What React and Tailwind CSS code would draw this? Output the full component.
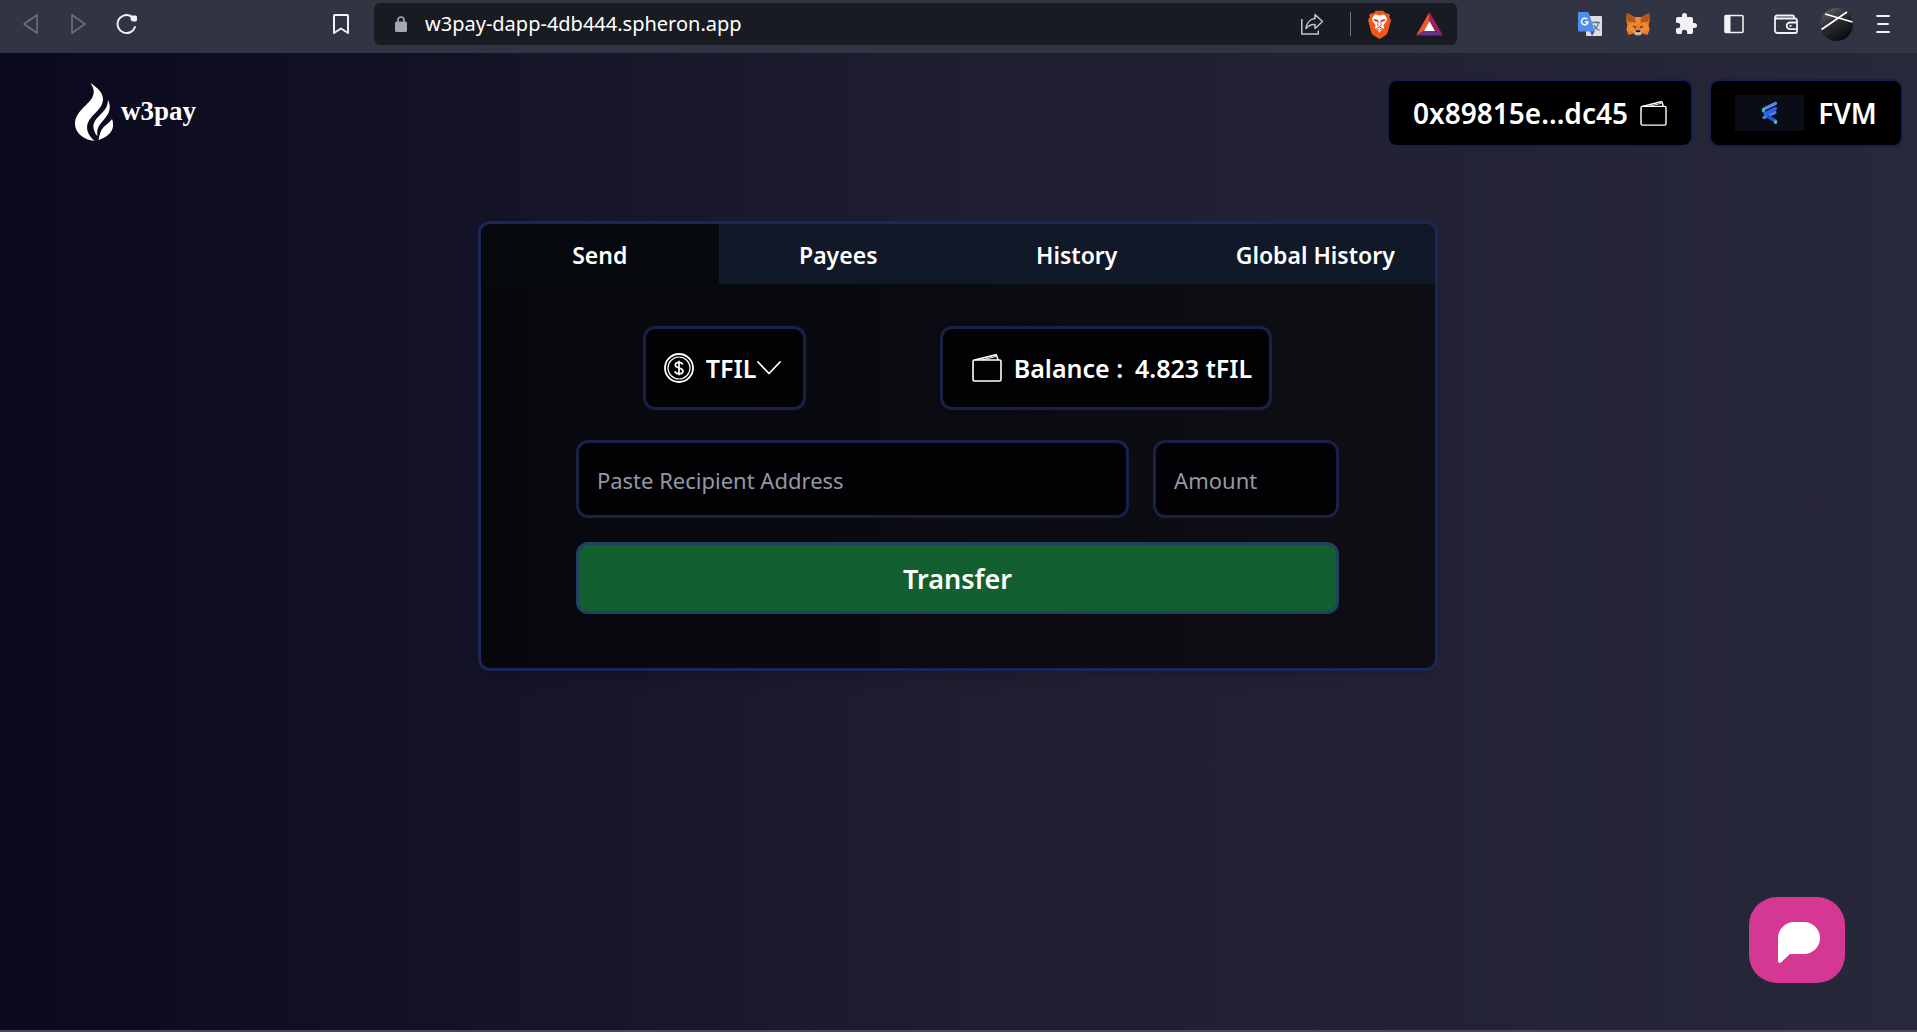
import React, { useState } from 'react'

const TABS = ['Send', 'Payees', 'History', 'Global History']

function BackIcon() {
  return (
    <svg className="w-6 h-6" viewBox="0 0 24 24" fill="none" stroke="#6d707c" strokeWidth="1.6" strokeLinejoin="round">
      <path d="M18 3v18L5 12z" />
    </svg>
  )
}

function ForwardIcon() {
  return (
    <svg className="w-6 h-6" viewBox="0 0 24 24" fill="none" stroke="#6d707c" strokeWidth="1.6" strokeLinejoin="round">
      <path d="M5 3v18l13-9z" />
    </svg>
  )
}

function ReloadIcon() {
  return (
    <svg className="w-6 h-6" viewBox="0 0 24 24" fill="none" stroke="#f1f1f6" strokeWidth="2" strokeLinecap="round">
      <path d="M15.5 4A9 9 0 1 0 20 15" />
      <path d="M17 5h3.500v3h-2a1.500 1.500 0 0 1-1.500-1.500z" fill="#f1f1f6" strokeWidth="3" strokeLinejoin="round" />
    </svg>
  )
}

function BookmarkIcon() {
  return (
    <svg className="w-6 h-6" viewBox="0 0 24 24" fill="none" stroke="#f1f1f6" strokeWidth="2" strokeLinejoin="round">
      <path d="M5 4a1 1 0 0 1 1-1h12a1 1 0 0 1 1 1v17l-7-4.500L5 21z" />
    </svg>
  )
}

function LockIcon() {
  return (
    <svg className="w-3 h-4" viewBox="0 0 12 16">
      <rect x="0" y="5.500" width="12" height="10.500" rx="1.500" fill="#a5a7b0" />
      <path d="M3 6V4a3 3 0 0 1 6 0v2" fill="none" stroke="#a5a7b0" strokeWidth="1.600" />
    </svg>
  )
}

function ShareIcon() {
  return (
    <svg className="w-6 h-6" viewBox="0 0 24 24" fill="none" stroke="#c3c4ca" strokeWidth="1.500">
      <path d="M1.800 7v15h16.500v-3.500" />
      <path d="M15 2.500l7.500 7-7.500 7v-4c-3.500-.3-6.500 1-9 4 .5-5.500 4-9.500 9-10z" strokeLinejoin="round" />
    </svg>
  )
}

function BraveIcon() {
  return (
    <svg className="w-[25px] h-[29px]" viewBox="0 0 25 29">
      <path d="M18.500 3.300L16.200.8H8.800L6.500 3.300C4.500 2.800 3 4 2 5l.8 2L1 10l3.200 12.300c.5 1.500 1 2.200 2.200 3L11 28.200c1 .7 2 .7 3 0l4.600-2.900c1.200-.8 1.700-1.500 2.200-3L24 10l-1.800-3 .8-2c-1-1-2.500-2.200-4.500-1.700z" fill="#f1561d" />
      <path d="M12.500 5.200c1.500 0 3-1 4.500-.7 1.300 1 2.300 2.500 3 4.500l-.8 2.500-2.900 3.800c.5 1 1 2.200.3 3.200l-2.600 2-1.500 2.300-1.500-2.300-2.600-2c-.7-1-.2-2.200.3-3.200l-2.900-3.800L5 9c.7-2 1.700-3.500 3-4.500 1.500-.3 3 .7 4.500.7z" fill="#fff" />
      <path d="M6.500 9l4.800 1-.4 1.800-3.500-.8zM18.500 9l-4.800 1 .4 1.800 3.500-.8z" fill="#b33a14" />
      <path d="M11.300 11l-.6 4.500 1.800 1.200 1.800-1.200-.6-4.500M9.500 18.500l3-1.500 3 1.500-3 1.800z" fill="none" stroke="#d4481a" strokeWidth=".9" />
    </svg>
  )
}

function RewardsIcon() {
  return (
    <svg className="w-[27px] h-6" viewBox="0 0 27 24">
      <path d="M13.500 0L0 23.500l8-4.500 5.500-9.500z" fill="#f1562f" />
      <path d="M13.500 0L27 23.500l-8-4.500-5.500-9.500z" fill="#9a1f63" />
      <path d="M0 23.500h27L19 19H8z" fill="#663392" />
      <path d="M13.500 9.300L19 19H8z" fill="#fff" />
    </svg>
  )
}

function TranslateIcon() {
  return (
    <svg className="w-6 h-6" viewBox="0 0 24 24">
      <rect x="8" y="4" width="16" height="20" rx="1" fill="#dcdee3" />
      <path d="M14 10.500h8M18 9v1.500M20.500 10.500c-.5 3.500-2.500 6-5 7.500M16 13c1 2.500 3 4.500 5.500 5.500" fill="none" stroke="#65798c" strokeWidth="1.300" />
      <path d="M12 19h5l-3 5z" fill="#3057b0" />
      <path d="M1 0h9.500L17 19.500H1a1 1 0 0 1-1-1V1a1 1 0 0 1 1-1z" fill="#4f8cf2" />
      <path d="M9.200 7.300A3.300 3.300 0 1 0 10 10H7" fill="none" stroke="#fff" strokeWidth="1.500" />
    </svg>
  )
}

function FoxIcon() {
  return (
    <svg className="w-6 h-6" viewBox="0 0 24 24">
      <path d="M1 1l7.500 4h7L23 1l1 7-1.500 5 1 5-2 5-5-1.500-2.500 2h-4l-2.500-2L2.500 23l-2-5 1-5L0 8z" fill="#e8792b" />
      <path d="M1 1l7.500 4 1 6L2 9.500 0 8zM23 1l-7.500 4-1 6L22 9.500l2-1.500z" fill="#b4571c" />
      <path d="M9.500 5h5l-1 7.500h-3z" fill="#f08b33" />
      <path d="M1.500 13l6.500-3 1.500 4-2 6-7-2zM22.500 13L16 10l-1.500 4 2 6 7-2z" fill="#f28a2e" />
      <path d="M6 13.500l4 1-.7 2zM18 13.500l-4 1 .7 2z" fill="#4a3024" />
      <path d="M8 19l2-1h4l2 1-1.500 3.500h-5z" fill="#d9cfc6" />
      <path d="M9.800 18.200h4.400l.4 2H9.400z" fill="#1f1a18" />
    </svg>
  )
}

function PuzzleIcon() {
  return (
    <svg className="w-6 h-6" viewBox="0 0 24 24" fill="#f1f1f6">
      <path d="M20.500 11H19V7a2 2 0 0 0-2-2h-4V3.500a2.500 2.500 0 0 0-5 0V5H4a2 2 0 0 0-2 2v3.800h1.500a2.700 2.700 0 0 1 0 5.400H2V20a2 2 0 0 0 2 2h3.800v-1.500a2.700 2.700 0 0 1 5.400 0V22H17a2 2 0 0 0 2-2v-4h1.500a2.500 2.500 0 0 0 0-5z" />
    </svg>
  )
}

function SidebarIcon() {
  return (
    <svg className="w-6 h-6" viewBox="0 0 24 24">
      <rect x="3" y="3.500" width="18" height="17" rx="1" fill="none" stroke="#f1f1f6" strokeWidth="1.600" />
      <path d="M3 3.500h5.500v17H3z" fill="#f1f1f6" />
    </svg>
  )
}

function BrowserWalletIcon() {
  return (
    <svg className="w-6 h-6" viewBox="0 0 24 24" fill="none" stroke="#f1f1f6" strokeWidth="1.800" strokeLinejoin="round">
      <path d="M20 6.500V5a1.500 1.500 0 0 0-1.500-1.500H3a2 2 0 0 0-2 2v13A2.500 2.500 0 0 0 3.500 21H21a2 2 0 0 0 2-2V8.500a2 2 0 0 0-2-2H3.500A2.300 2.300 0 0 1 1 4.800" />
      <path d="M23 10.500h-7a3.300 3.300 0 0 0 0 6.600h7" />
      <path d="M15.500 13.800h2" />
    </svg>
  )
}

function Avatar() {
  return (
    <svg className="w-[33px] h-[33px]" viewBox="0 0 33 33">
      <defs>
        <linearGradient id="avatar" x1="0" y1="0" x2=".6" y2="1">
          <stop offset="0" stopColor="#6a6d74" />
          <stop offset=".5" stopColor="#2b2d32" />
          <stop offset="1" stopColor="#0b0c0f" />
        </linearGradient>
      </defs>
      <circle cx="16.500" cy="16.500" r="16.500" fill="url(#avatar)" />
      <path d="M5 6l27.500 8M1.500 21.500L27 4" stroke="#fff" strokeWidth="1.700" />
    </svg>
  )
}

function MenuIcon() {
  return (
    <svg className="w-4 h-6" viewBox="0 0 16 24" stroke="#f1f1f6" strokeWidth="1.900" strokeLinecap="round">
      <path d="M2 4h12M3 12h10M2 20h12" />
    </svg>
  )
}

function FlameLogo() {
  return (
    <svg className="w-[38px] h-[58px]" viewBox="0 0 38 58" fill="#fff">
      <path d="M15.500 0c3.500 6 4.500 9 1.500 15C13 22 0 29 0 41c0 9 9 16 19.500 17C13 52 10.500 46 13 39.500 16.500 31 28 26 28 16.500 28 9.500 22.500 5 15.500 0z" />
      <path d="M33 17c-.5 8-4 11-8 15-4.500 4.500-8 8.500-6 15 .6 2.500 2 5 3.500 6-.8-5 0-9 4-13.500C31.500 34 38 27 33 17z" />
      <path d="M37 36c-3 4.500-6.500 5.500-9.500 9.500-2.200 3-3 6.500-4 11.500 6-2 11-5 13.500-10 1.500-3.500 1.500-7 0-11z" />
    </svg>
  )
}

function WalletIcon({ className }) {
  return (
    <svg className={className} viewBox="0 0 30 28" fill="none" stroke="#fff" strokeWidth="1.600" strokeLinejoin="round">
      <rect x="1" y="6" width="28" height="21" rx="1.500" />
      <path d="M2.500 6L23.500.9a1 1 0 0 1 1.200.7L26 6" />
      <path d="M10 6l14-3.500" strokeWidth="1" />
    </svg>
  )
}

function CoinIcon() {
  return (
    <svg className="w-[30px] h-[30px]" viewBox="0 0 30 30" fill="none" stroke="#fff">
      <circle cx="15" cy="15" r="14" strokeWidth="1.800" />
      <circle cx="15" cy="15" r="11" strokeWidth="1.200" />
      <path d="M18.700 11.500c-.5-1.400-1.800-2.100-3.700-2.100-2.200 0-3.700 1-3.700 2.700 0 4 7.700 1.800 7.700 5.800 0 1.800-1.700 2.800-4 2.800-2.200 0-3.700-.9-4.100-2.500M15 7.800v14.400" strokeWidth="1.700" />
    </svg>
  )
}

function ChevronIcon() {
  return (
    <svg className="w-6 h-[14px]" viewBox="0 0 24 14" fill="none" stroke="#fff" strokeWidth="1.800" strokeLinecap="round" strokeLinejoin="round">
      <path d="M1 1l11 11.500L23 1" />
    </svg>
  )
}

function FvmLogo() {
  return (
    <svg className="w-[69px] h-9 bg-[#0a0d16]" viewBox="0 0 69 36" fill="none" strokeWidth="3.200" strokeLinecap="round">
      <path d="M29 14l11.500-5.500" stroke="#5b87ee" />
      <path d="M28.500 14.500v1.500" stroke="#36b9c4" />
      <path d="M30 18.500l10.500-5" stroke="#2c62e8" />
      <path d="M29 22.500l11-5" stroke="#4a7bf0" />
      <path d="M33 21.500l7.500 4.500" stroke="#1f55e0" strokeWidth="3.600" />
      <path d="M40.500 26.500v1" stroke="#36c4a8" />
    </svg>
  )
}

function ChatIcon() {
  return (
    <svg className="w-[42px] h-[41px]" viewBox="0 0 42 41" fill="#fff">
      <path d="M16 0h10a16 16 0 0 1 0 32H12l-8.800 8.300C2 41.400 0 41 0 39V16A16 16 0 0 1 16 0z" />
    </svg>
  )
}

function BrowserBar() {
  return (
    <div className="flex h-[53px] shrink-0 items-start bg-[#313442]">
      <div className="flex h-12 w-[374px] items-center gap-6 pl-[19px] pr-[21px]">
        <button aria-label="Back"><BackIcon /></button>
        <button aria-label="Forward"><ForwardIcon /></button>
        <button aria-label="Reload"><ReloadIcon /></button>
        <button aria-label="Bookmark" className="ml-auto"><BookmarkIcon /></button>
      </div>
      <div className="mt-[3px] flex h-[42px] flex-1 items-center rounded-md bg-[#191b22] pl-[21px] pr-[14px]">
        <LockIcon />
        <input
          aria-label="Address"
          defaultValue="w3pay-dapp-4db444.spheron.app"
          className="ml-[18px] min-w-0 flex-1 bg-transparent text-[20px] leading-7 text-white outline-none"
        />
        <button aria-label="Share"><ShareIcon /></button>
        <div className="ml-[26px] h-6 w-px bg-[#73757e]" />
        <button aria-label="Shields" className="ml-4"><BraveIcon /></button>
        <button aria-label="Rewards" className="ml-6"><RewardsIcon /></button>
      </div>
      <div className="flex h-12 w-[460px] items-center justify-end pr-[26px]">
        <div className="mr-7 flex gap-6">
          <button aria-label="Translate"><TranslateIcon /></button>
          <button aria-label="MetaMask"><FoxIcon /></button>
          <button aria-label="Extensions"><PuzzleIcon /></button>
          <button aria-label="Sidebar"><SidebarIcon /></button>
        </div>
        <div className="flex items-center gap-[22px]">
          <button aria-label="Wallet"><BrowserWalletIcon /></button>
          <button aria-label="Profile"><Avatar /></button>
          <button aria-label="Menu"><MenuIcon /></button>
        </div>
      </div>
    </div>
  )
}

function Header() {
  return (
    <header className="flex items-start justify-between pl-[75px] pr-[14px] pt-[26px]">
      <a href="#" className="mt-1 flex items-center gap-2">
        <FlameLogo />
        <span className="mb-0.5 font-['Liberation_Serif',serif] text-[27px] font-bold leading-8 text-white">w3pay</span>
      </a>
      <div className="flex gap-4">
        <button className="flex h-[68px] items-center gap-3 rounded-[10px] border-2 border-[#162050] bg-black px-6 text-[28px] font-semibold text-white">
          0x89815e...dc45
          <WalletIcon className="h-[25px] w-[27px]" />
        </button>
        <button className="flex h-[68px] w-[194px] items-center justify-center gap-[14px] rounded-[10px] border-2 border-[#162050] bg-black text-[28px] font-semibold text-white">
          <FvmLogo />
          FVM
        </button>
      </div>
    </header>
  )
}

function TransferCard() {
  const [tab, setTab] = useState('Send')
  const [address, setAddress] = useState('')
  const [amount, setAmount] = useState('')

  return (
    <section className="mx-auto w-full max-w-[960px] overflow-hidden rounded-xl border-[3px] border-[#1b2659] bg-linear-to-r from-[#07070e] to-[#0e0e14] pb-[54px] shadow-lg">
      <div role="tablist" className="grid grid-cols-4">
        {TABS.map(t => (
          <button
            key={t}
            role="tab"
            aria-selected={t === tab}
            onClick={() => setTab(t)}
            className={`h-[60px] pt-0.5 text-[23px] font-semibold text-white ${t === tab ? 'bg-[#06090e]' : 'bg-[#111827]'}`}
          >
            {t}
          </button>
        ))}
      </div>

      <form className="mx-auto w-4/5 pt-[42px]" onSubmit={(e) => e.preventDefault()}>
        {/* Token + balance */}
        <div className="flex justify-around">
          <div className="flex h-[84px] w-[163px] items-center rounded-xl border-[3px] border-[#1a2148] bg-[#020204] pl-[18px]">
            <CoinIcon />
            <select aria-label="Token" className="ml-3 appearance-none bg-transparent pt-0.5 text-[25px] font-semibold text-white outline-none">
              <option>TFIL</option>
            </select>
            <ChevronIcon />
          </div>
          <div className="flex h-[84px] items-center rounded-xl border-[3px] border-[#1a2148] bg-[#020204] pl-[29px] pr-[17px] text-[25px] font-semibold text-white">
            <WalletIcon className="h-7 w-[30px]" />
            <span className="ml-3 pt-0.5">Balance :</span>
            <span className="ml-3 pt-0.5">4.823 tFIL</span>
          </div>
        </div>

        {/* Recipient */}
        <div className="mt-[30px] flex gap-6">
          <input
            aria-label="Recipient address"
            placeholder="Paste Recipient Address"
            value={address}
            onChange={(e) => setAddress(e.target.value)}
            className="h-[78px] min-w-0 flex-1 rounded-xl border-[3px] border-[#1a2148] bg-[#020204] px-[18px] pt-0.5 text-[22px] text-white outline-none placeholder:text-[#9299a6]"
          />
          <input
            aria-label="Amount"
            placeholder="Amount"
            value={amount}
            onChange={(e) => setAmount(e.target.value)}
            className="h-[78px] w-[186px] rounded-xl border-[3px] border-[#1a2148] bg-[#020204] px-[18px] pt-0.5 text-[22px] text-white outline-none placeholder:text-[#9299a6]"
          />
        </div>

        <button className="mt-6 h-[72px] w-full rounded-xl border-[3px] border-[#1f4263] bg-[#145f30] pt-0.5 text-[27px] font-semibold text-white">
          Transfer
        </button>
      </form>
    </section>
  )
}

export default function App() {
  return (
    <div className="flex min-h-screen flex-col font-['Noto_Sans','Open_Sans',sans-serif]">
      <BrowserBar />
      <main className="flex-1 border-b-2 border-[#4b4752] bg-linear-to-r from-[#0b091d] via-[#1f1d30] to-[#28283b]">
        <Header />
        <div className="pr-0.5 pt-[74px]">
          <TransferCard />
        </div>
      </main>
      <button
        aria-label="Open chat"
        className="fixed bottom-[49px] right-[72px] flex h-[86px] w-24 items-center justify-center rounded-[28px] bg-[#d53893] pl-1 pt-1"
      >
        <ChatIcon />
      </button>
    </div>
  )
}
